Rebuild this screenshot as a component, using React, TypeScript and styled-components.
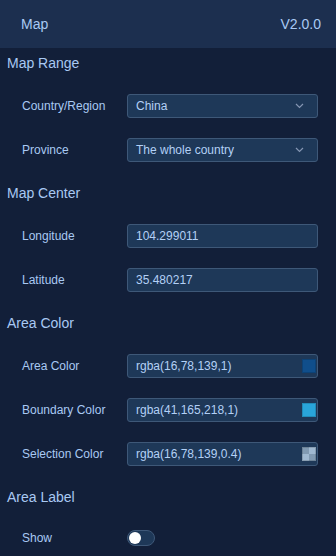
import React from 'react';
import styled, { createGlobalStyle } from 'styled-components';

const GlobalStyle = createGlobalStyle`
  html, body {
    margin: 0;
    padding: 0;
    background: #121f39;
  }
  * {
    box-sizing: border-box;
  }
`;

const Panel = styled.div`
  width: 336px;
  height: 556px;
  overflow: hidden;
  background: #121f39;
  font-family: 'Liberation Sans', Arial, sans-serif;
  color: #a9c9f3;
`;

const Header = styled.div`
  height: 48px;
  display: flex;
  align-items: center;
  justify-content: space-between;
  padding: 0 15px 0 21px;
  background: #1c2f4f;
  font-size: 14px;
`;

const Section = styled.div`
  display: flex;
  flex-direction: column;
`;

const SectionTitle = styled.div`
  height: 30px;
  display: flex;
  align-items: center;
  padding-left: 7px;
  font-size: 14px;
`;

const Rows = styled.div`
  padding: 6px 18px 6px 22px;
`;

const Row = styled.div<{ $compact?: boolean }>`
  height: 44px;
  display: grid;
  grid-template-columns: 105px 1fr;
  align-items: center;
  margin-top: ${p => (p.$compact ? '-2px' : '0')};
`;

const Label = styled.div`
  font-size: 12px;
  color: #a9c9f3;
`;

const Field = styled.div`
  position: relative;
  height: 24px;
  display: flex;
  align-items: center;
  padding: 0 8px;
  background: #1e3858;
  border: 1px solid #3e5878;
  border-radius: 3px;
  font-size: 12px;
  color: #b3d0f6;
`;

const FieldText = styled.span`
  flex: 1;
`;

const Chevron = styled.svg`
  width: 9px;
  height: 6px;
  margin-right: 5px;
`;

const Swatch = styled.span<{ $color: string; $checker?: boolean }>`
  position: absolute;
  right: 1px;
  top: 4px;
  width: 14px;
  height: 14px;
  background: ${p =>
    p.$checker
      ? `linear-gradient(${p.$color}, ${p.$color}), conic-gradient(#ffffff 0 25%, #cccccc 0 50%, #ffffff 0 75%, #cccccc 0)`
      : p.$color};
  background-size: ${p => (p.$checker ? '100% 100%, 14px 14px' : 'auto')};
  box-shadow: inset 0 0 0 1px rgba(0, 0, 0, 0.15);
`;

const Toggle = styled.div`
  width: 28px;
  height: 16px;
  border-radius: 8px;
  border: 1px solid #3e5878;
  background: #1e3858;
  display: flex;
  align-items: center;
  padding-left: 1px;
`;

const Knob = styled.span`
  width: 12px;
  height: 12px;
  border-radius: 50%;
  background: #ffffff;
`;

function Select ({ value }: { value: string }) {
  return (
    <Field>
      <FieldText>{value}</FieldText>
      <Chevron viewBox='0 0 9 6'>
        <path d='M1 1 L4.5 4.5 L8 1' fill='none' stroke='#8596b3' strokeWidth='1.2' />
      </Chevron>
    </Field>
  );
}

function ColorField ({ value, color, checker }: { value: string; color: string; checker?: boolean }) {
  return (
    <Field>
      <FieldText>{value}</FieldText>
      <Swatch $color={color} $checker={checker} />
    </Field>
  );
}

export default function App () {
  return (
    <Panel>
      <GlobalStyle />
      <Header>
        <span>Map</span>
        <span>V2.0.0</span>
      </Header>

      <Section>
        <SectionTitle>Map Range</SectionTitle>
        <Rows>
          <Row>
            <Label>Country/Region</Label>
            <Select value='China' />
          </Row>
          <Row>
            <Label>Province</Label>
            <Select value='The whole country' />
          </Row>
        </Rows>
      </Section>

      <Section>
        <SectionTitle>Map Center</SectionTitle>
        <Rows>
          <Row>
            <Label>Longitude</Label>
            <Field>104.299011</Field>
          </Row>
          <Row>
            <Label>Latitude</Label>
            <Field>35.480217</Field>
          </Row>
        </Rows>
      </Section>

      <Section>
        <SectionTitle>Area Color</SectionTitle>
        <Rows>
          <Row>
            <Label>Area Color</Label>
            <ColorField value='rgba(16,78,139,1)' color='rgba(16,78,139,1)' />
          </Row>
          <Row>
            <Label>Boundary Color</Label>
            <ColorField value='rgba(41,165,218,1)' color='rgba(41,165,218,1)' />
          </Row>
          <Row>
            <Label>Selection Color</Label>
            <ColorField value='rgba(16,78,139,0.4)' color='rgba(16,78,139,0.4)' checker />
          </Row>
        </Rows>
      </Section>

      <Section>
        <SectionTitle>Area Label</SectionTitle>
        <Rows>
          <Row $compact>
            <Label>Show</Label>
            <Toggle>
              <Knob />
            </Toggle>
          </Row>
        </Rows>
      </Section>
    </Panel>
  );
}
